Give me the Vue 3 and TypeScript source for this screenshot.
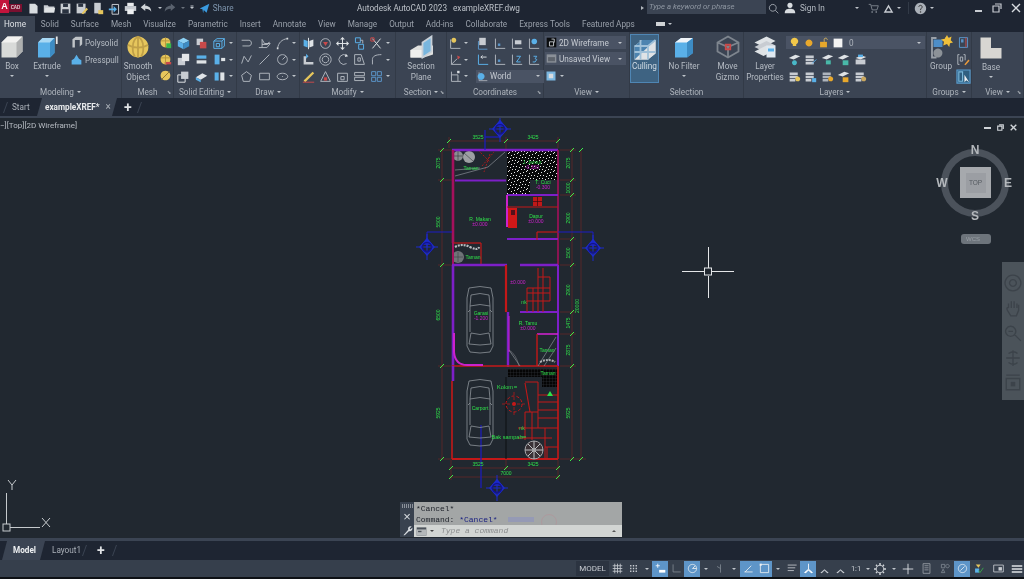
<script setup lang="ts">
import { h } from 'vue'
import type { FunctionalComponent } from 'vue'

type Shape = [string, string?, string?]
const cube = (t: string, l: string, r: string): Shape[] => [
  ['M8 1 15 4.5 8 8 1 4.5Z', t],
  ['M1 4.5 8 8V15L1 11.5Z', l],
  ['M15 4.5 8 8V15L15 11.5Z', r],
]
const L = '#aeb4bc'
const B = '#5ab0e8'
const W = '#dfe3e6'
const Y = '#e6c65c'
const ICONS: Record<string, Shape[]> = {
  page: [['M3 2H10L13 5V14H3Z', '#d8dce0']],
  folder: [['M1 4H6L7 5.5H14V13H1Z', '#c8ccd2'], ['M3 7H15L13.5 13H1.5Z', '#e0e3e6']],
  disk: [['M2 2H14V14H2Z', '#c8ccd2'], ['M5 2H11V6H5ZM4 9H12V14H4Z', '#2a3240']],
  saveas: [['M2 2H13V14H2Z', '#c8ccd2'], ['M4 2H10V6H4Z', '#2a3240'], ['M8 14 14 7 16 9 10 15Z', Y]],
  phone: [['M4 1H12V14H4Z', '#c8ccd2'], ['M9 10H15V15H9Z', Y]],
  up: [['M5 3H13V15H5Z', 'none', '#c8ccd2'], ['M1 8H7V5L11 9 7 13V10H1Z', B]],
  printer: [['M4 1H12V5H4Z', '#e8eaec'], ['M1 5H15V11H1Z', '#c8ccd2'], ['M4 9H12V15H4Z', '#eef0f2']],
  undo: [['M1 7 7 2V5C12 5 15 8 15 13 13 10 11 9 7 9V12Z', '#d0d4d8']],
  redo: [['M15 7 9 2V5C4 5 1 8 1 13 3 10 5 9 9 9V12Z', '#5a626e']],
  plane: [['M1 8 15 1 11 14 7 10 6 15 5 9Z', '#3a9be0']],
  search: [['M7 2A5 5 0 1 1 6.9 2ZM10.5 10.5 15 15', 'none', '#aeb4bc']],
  user: [['M8 1A3.5 3.5 0 1 1 7.9 1ZM1 15C1 10 4 9 8 9S15 10 15 15Z', '#d8dce0']],
  cart: [['M1 2H4L6 10H13L15 4H5', 'none', '#888f98'], ['M5 12H7V14H5ZM11 12H13V14H11Z', '#888f98']],
  aTri: [['M8 2 15 14H1ZM8 6 4.5 12H11.5Z', '#c8ccd2']],
  help: [['M8 1A7 7 0 1 1 7.9 1Z', '#aab0b8'], ['M6 6C6 3.5 10 3.5 10 6 10 8 8 7.5 8 10', 'none', '#333'], ['M7.3 11.5H8.8V13H7.3Z', '#333']],
  boxBig: [['M1 5 5 1H15V11L11 15H1Z', '#d8dad8'], ['M1 5 5 1H15L11 5Z', '#f2f2f0'], ['M11 5 15 1V11L11 15Z', '#aeb0b0']],
  extr: [['M2 5 5 2H13V12L10 15H2Z', B], ['M2 5 5 2H13L10 5Z', '#a8d8f4'], ['M10 5 13 2V12L10 15Z', '#3d8cc4'], ['M14.5 1V6', 'none', '#e8e8e8']],
  poly: [['M3 4 7 1H15V10L12 13V5H6V14H3Z', '#c0c4c8']],
  press: [['M5 7 8 2 11 7 14 9V14H2V9Z', B]],
  sphere: [['M8 1A7 7 0 1 1 7.9 1Z', Y], ['M1.2 6.5C5 9 11 9 14.8 6.5M8 1V15M8 1C5 3 4.5 6 4.6 7.8C4.2 10.5 5 13 6 14.5M8 1C11 3 11.5 6 11.4 7.8C11.8 10.5 11 13 10 14.5', 'none', '#c0a048']],
  sphG: [['M8 2A6 6 0 1 1 7.9 2Z', Y], ['M9 9H15V15H9Z', '#39b54a'], ['M2 6H14M8 2V14', 'none', '#b8963c']],
  sphR: [['M8 2A6 6 0 1 1 7.9 2Z', Y], ['M7 11H15V14H7Z', '#c94a4a'], ['M2 6H14M8 2V14', 'none', '#b8963c']],
  sphC: [['M8 2A6 6 0 1 1 7.9 2Z', Y], ['M3 13 13 3', 'none', '#8c7430']],
  se1: cube('#8cd0f4', B, '#3d8cc4'),
  se2: [['M2 2H10V10H2Z', '#c8ccd2'], ['M6 6H14V14H6Z', '#c94a4a']],
  se3: [['M1 5 5 2H14V11L11 14H1Z', 'none', B], ['M1 5H11V14M11 5 14 2', 'none', B], ['M4 8H8V12H4Z', 'none', B]],
  se4: [['M1 6H10V15H1Z', '#c8ccd2'], ['M6 1H15V10H6Z', '#e4e6e8']],
  se5: [['M2 3H14V7H2Z', B], ['M2 9H14V13H2Z', W]],
  se6: [['M2 2H8V14H2Z', B], ['M10 6H15V10H10Z', W]],
  se7: [['M1 6H10V15H1Z', 'none', W], ['M5 2H14V11H5Z', '#c8ccd2']],
  se8: [['M1 9 9 4 15 7 7 12Z', W], ['M1 9V12L7 15V12Z', B]],
  se9: [['M2 3H7V13H2Z', B], ['M9 3H14V13H9Z', W]],
  d1: [['M2 4H11C15 4 15 11 11 11H3', 'none', L]],
  d2: [['M1 13H11L15 8H8L5 3V13', 'none', L], ['M5 9 12 9 14 6', 'none', '#c8ccd2']],
  d3: [['M2 14C3 7 7 3 14 2', 'none', L], ['M1 13H3V15H1ZM13 1H15V3H13Z', '#d8dce0']],
  d4: [['M2 13 5 4 10 11 14 3', 'none', L]],
  d5: [['M2 14 14 2', 'none', L]],
  d6: [['M8 2A6 6 0 1 1 7.9 2ZM8 8 12 4', 'none', L]],
  d7: [['M8 2 14 6.5 12 14H4L2 6.5Z', 'none', L]],
  d8: [['M2 4H14V12H2Z', 'none', L]],
  d9: [['M8 4A6.5 4 0 1 1 7.9 4ZM8 7.5V8.5', 'none', L]],
  m1: [['M2 3 7 5V13L2 11Z', B], ['M9 5 14 3V11L9 13Z', W], ['M8 1V15', 'none', W]],
  m2: [['M8 2A6 6 0 1 1 7.9 2Z', 'none', L], ['M5 6H11L8 11Z', '#c94a4a']],
  m3: [['M8 1V15M1 8H15', 'none', W], ['M8 0 11 3H5ZM8 16 5 13H11ZM0 8 3 5V11ZM16 8 13 11V5Z', W]],
  m4: [['M3 1H9V7H3ZM7 9H13V15H7Z', 'none', B], ['M9 4H12V8', 'none', L]],
  m5: [['M3 2 13 14M13 2 3 14', 'none', W], ['M1 1H5V5H1Z', 'none', '#c94a4a']],
  m6: [['M2 14V4H5V11H14V14Z', '#c8ccd2'], ['M5 1 8 4 5 7Z', B]],
  m7: [['M8 1A7 7 0 1 1 7.9 1ZM8 4A4 4 0 1 1 7.9 4Z', 'none', L]],
  m8: [['M13 3A6 6 0 1 0 13 13', 'none', L], ['M12 1 15 4 11 5Z', W]],
  m9: [['M2 14V2H10L14 14Z', 'none', L], ['M6 6H9V10H6Z', 'none', L]],
  m10: [['M3 14V8C3 4 7 2 14 2', 'none', L]],
  m11: [['M2 13 13 2 15 4 4 15Z', Y], ['M1 15H15', 'none', '#c94a4a']],
  m12: [['M8 2 14 14H2Z', 'none', L], ['M6 9H10V13H6Z', '#c94a4a']],
  m13: [['M2 4H14V14H2Z', 'none', L], ['M6 8H10V12H6Z', 'none', L]],
  m14: [['M2 3H14V7H2ZM2 9H14V13H2Z', 'none', L]],
  m15: [['M2 2H7V7H2ZM9 2H14V7H9ZM2 9H7V14H2ZM9 9H14V14H9Z', 'none', '#5a94c8']],
  sec: [['M1 10 6 7 16 7V13L10 15H1Z', '#dfe0de'], ['M1 10H10V15H1Z', '#f0f0ee'], ['M9 5 15 1V11L9 15Z', '#79b6de', '#c8d0d8']],
  c1: [['M2 3V14H14', 'none', L], ['M6 1A3 3 0 1 1 5.9 1Z', Y]],
  c2: [['M4 1H12V10H4Z', '#c8ccd2'], ['M3 5V15H14', 'none', '#5a94c8']],
  c3: [['M3 2V14H15', 'none', L], ['M6 8H9V11H6Z', '#5a94c8']],
  c4: [['M3 2V14H15', 'none', L], ['M6 4H14V9H6Z', '#c8ccd2']],
  c5: [['M3 2V14H15', 'none', L], ['M9 2A3.5 3.5 0 1 1 8.9 2Z', B]],
  c6: [['M3 2V14H15M3 14 10 7', 'none', L], ['M10 3 14 5 11 8Z', '#c94a4a']],
  c7: [['M3 2V14H15', 'none', B], ['M6 5H13M6 5 8 3M6 5 8 7', 'none', '#d8dce0']],
  c8: [['M3 2V14H15', 'none', L], ['M8 4H13L8 11H13', 'none', B]],
  c9: [['M3 2V14H15', 'none', L], ['M8 4H12L10 7 12 8 10 11H7', 'none', B]],
  c10: [['M3 2V14H15M3 6H11V14', 'none', L], ['M10 1H13V4H10Z', '#d8dce0']],
  vw: [['M2 2H14V14H2Z', '#7ab6e0'], ['M5 5H11V11H5Z', '#d8dce0']],
  wire: [['M1 1H15V15H1Z', '#0a0c0e'], ['M5 7H11V13H5ZM8 3 12 3 12 8', 'none', '#d8dce0']],
  unsaved: [['M1 2H15V14H1Z', '#8a9098'], ['M3 6H13V12H3Z', '#5e646c']],
  world: [['M3 2V14H15', 'none', L], ['M6 3A5 5 0 1 1 5.9 3Z', B]],
  cull: [['M1 6 6 2H15V11L10 15H1Z', '#dfe3e6'], ['M1 15 15 2V11L10 15Z', '#dfe3e6'], ['M1 6 6 2H15L1 15Z', '#4d84b0'], ['M1 6H10V15M10 6 15 2M5 2V15M1 10H15', 'none', '#9fc0d8']],
  nofilt: [['M2 5 6 2H14V12L10 15H2Z', B], ['M2 5 6 2H14L10 5Z', '#f0f4f8'], ['M10 5 14 2V12L10 15Z', '#3d8cc4']],
  gizmo: [['M8 1 15 5V11L8 15 1 11V5ZM1 5 8 8 15 5M8 8V15', 'none', '#7e858e'], ['M6.5 6.5H9.5V9.5H6.5Z', 'none', '#c94a4a']],
  lprop: [['M1 5 9 1 15 4 7 8Z', W], ['M1 8 9 4 15 7 7 11Z', '#c8ccd2'], ['M1 11 9 7 15 10 7 14Z', W], ['M9 7H15V15H9Z', '#dfe8f0'], ['M10 9H14V11H10Z', B]],
  bulb: [['M8 1A5 5 0 0 1 10.5 10.5V13H5.5V10.5A5 5 0 0 1 8 1Z', '#f2c84a']],
  sun: [['M8 2.5A5.5 5.5 0 1 1 7.9 2.5Z', '#e8a82c']],
  lock: [['M3 7H13V15H3Z', '#e8a82c'], ['M9 7V3.5C9 1 13.5 1 13.5 4', 'none', '#e8c05c']],
  white: [['M1 1H15V15H1Z', '#f4f4f4']],
  l1: [['M1 6 9 2 15 4 7 8Z', W], ['M8 9A3 3 0 1 1 7.9 9Z', '#49b8c8']],
  l2: [['M2 3H12V6H2ZM2 7H12V10H2ZM2 11H12V14H2Z', '#c8ccd2'], ['M10 13 15 8', 'none', B]],
  l3: [['M1 6 9 2 15 4 7 8Z', W], ['M6 9H12V14H6Z', '#49b8a8']],
  l4: [['M1 6 9 2 15 4 7 8Z', W], ['M7 9H14V15H7Z', '#49b8a8']],
  l5: [['M2 6 9 3 15 5 8 8Z', W], ['M5 2H11V5H5Z', B], ['M2 8H14V14H2Z', '#c8ccd2']],
  l6: [['M2 3H12V6H2ZM2 7H12V10H2ZM2 11H9V14H2Z', '#c8ccd2'], ['M12 8A3 3 0 1 1 11.9 8Z', Y]],
  l7: [['M2 3H12V6H2ZM2 7H12V10H2ZM2 11H9V14H2Z', '#c8ccd2'], ['M10 10H15V15H10Z', B]],
  l8: [['M2 3H12V6H2ZM2 7H12V10H2ZM2 11H9V14H2Z', '#aeb4bc'], ['M12 8A3 3 0 1 1 11.9 8Z', '#e8a82c']],
  l9: [['M1 6 9 2 15 4 7 8Z', W], ['M7 9H14V15H7Z', '#e8a82c']],
  l10: [['M2 3H12V6H2ZM2 7H12V10H2ZM2 11H9V14H2Z', '#c8ccd2'], ['M12 8A3 3 0 1 1 11.9 8Z', '#caa860']],
  group: [['M5 2H2V15H5M11 2H13', 'none', '#9aa0a8'], ['M3 3H9V8H3Z', '#4e8ec8'], ['M6 9A3 3 0 1 1 5.9 9Z', '#8c9298'], ['M12 0 13 2 15 1 14.5 3.5 16 5 14 5.5 13.5 8 12 6 9.5 7 10 4.5 8 3 10.5 2.5Z', '#f0c03a']],
  g1: [['M3 2H13V14H3Z', 'none', '#5a94c8'], ['M5 4H8V8H5Z', '#5a94c8'], ['M11 2V14', 'none', '#c94a4a']],
  g2: [['M3 2H1V14H3M8 2H10V9', 'none', L], ['M4 5H7V10H4Z', 'none', L], ['M9 14 14 8 15.5 9.5 10.5 15Z', '#e89a3c']],
  g3: [['M1 1H15V15H1Z', '#2f5f80', '#5a9ccc'], ['M3 3H7V13H3Z', 'none', '#7ab6d8'], ['M9 6V14L11 12 14 14Z', '#eef0f2']],
  base: [['M1 1H8V8H15V15H1Z', '#d8d6d2']],
  grid: [['M1 4H15M1 8H15M1 12H15M4 1V15M8 1V15M12 1V15', 'none', '#c8ccd2']],
  dots: [['M3 3H5V5H3ZM7 3H9V5H7ZM11 3H13V5H11ZM3 7H5V9H3ZM7 7H9V9H7ZM11 7H13V9H11ZM3 11H5V13H3ZM7 11H9V13H7ZM11 11H13V13H11Z', '#c8ccd2']],
  track: [['M4 1V7M1 4H7', 'none', '#fff'], ['M6 10H15V14H6Z', '#fff']],
  ortho: [['M3 2V13H14', 'none', '#808892']],
  polar: [['M8 2A6 6 0 1 1 7.9 2ZM8 8H14M8 8 12 4', 'none', '#eef0f2']],
  iso: [['M8 2V14M3 5 8 8', 'none', '#808892']],
  slope: [['M2 13H14M3 13 12 4', 'none', '#eef0f2']],
  snapbox: [['M2 2H14V14H2Z', 'none', '#eef0f2'], ['M1 1H4V4H1Z', '#eef0f2']],
  lw: [['M1 3H14M1 7H12M1 11H10', 'none', '#c8ccd2']],
  an1: [['M8 1V9L2 14M8 9 14 14', 'none', '#fff'], ['M8 1V9L2 14 4 15 8 11 12 15 14 14 8 9Z', '#fff']],
  an2: [['M8 2V9L2 14 4 15 8 11 12 15 14 14 8 9Z', '#c8ccd2']],
  gear: [['M8 3A5 5 0 1 1 7.9 3Z', 'none', '#d0d4d8'], ['M7 0H9V3H7ZM7 13H9V16H7ZM0 7H3V9H0ZM13 7H16V9H13ZM2 3 3.5 1.8 5 3.5 3.5 5ZM11 12.5 12.5 11 14 12.7 12.6 14ZM2 12.7 3.5 11 5 12.5 3.4 14ZM11 3.5 12.5 1.8 14 3 12.5 5Z', '#d0d4d8']],
  plus: [['M8 1V15M1 8H15', 'none', '#e0e3e6']],
  calc: [['M3 1H13V15H3Z', 'none', '#9aa0a8'], ['M5 4H11M5 7H11M5 10H11', 'none', '#9aa0a8']],
  shapes: [['M2 2H7V7H2ZM11 2A2.5 2.5 0 1 1 10.9 2ZM4.5 9 7 14H2Z', 'none', '#808892']],
  gauge: [['M8 2A6 6 0 1 1 7.9 2ZM5 11 11 5', 'none', '#e8eef4']],
  clean: [['M4 2 11 2 8 7Z', Y], ['M3 8H9V14H3Z', B], ['M8 11 10 14 15 7', 'none', '#39b54a']],
  mon: [['M1 3H15V13H1Z', 'none', '#c8ccd2'], ['M8 6H13V11H8Z', '#c8ccd2']],
  menu: [['M1 3H15V5H1ZM1 7H15V9H1ZM1 11H15V13H1Z', '#e0e3e6']],
  wrench: [['M2 15 9 7C8 3 11 1 14 2L11 5 12.5 6.5 15 3.5C16 7 13 9.5 10 9L4 15Z', '#d8dce0']],
  term: [['M1 2H15V14H1Z', '#4c525a'], ['M1 5H15V14H1Z', '#b4b8ba'], ['M3 7H8V9H3Z', '#4c525a']],
  nav1: [['M8 1A7 7 0 1 1 7.9 1ZM8 5A3 3 0 1 1 7.9 5Z', 'none', '#3c434a']],
  nav2: [['M4 8V4M6.5 8V2M9 8V2M11.5 8V4M4 8C3 7 2 8 3 10L6 15H11L13 10V5', 'none', '#3c434a']],
  nav3: [['M6 2A4.5 4.5 0 1 1 5.9 2ZM9 9 15 15M4 6.5H8', 'none', '#3c434a']],
  nav4: [['M8 1V15M2 8H14M4 4C7 2 10 2 12 4M4 12C7 14 10 14 12 12', 'none', '#3c434a']],
  nav5: [['M2 4H14V14H2ZM2 1H14', 'none', '#3c434a'], ['M6 7H10V11H6Z', '#3c434a']],
}

const Ico: FunctionalComponent<{ name: string; size?: number }> = (p) =>
  h('svg', { width: p.size ?? 13, height: p.size ?? 13, viewBox: '0 0 16 16', class: 'ico' },
    (ICONS[p.name] ?? []).map(([d, f, s]) => h('path', { d, fill: f || 'none', stroke: s || 'none', 'stroke-width': 1.2 })))
Ico.props = ['name', 'size']

const ribbonTabs = ['Home', 'Solid', 'Surface', 'Mesh', 'Visualize', 'Parametric', 'Insert', 'Annotate', 'View', 'Manage', 'Output', 'Add-ins', 'Collaborate', 'Express Tools', 'Featured Apps']
const qat = ['page', 'folder', 'disk', 'saveas', 'phone', 'up', 'printer']
const meshIcons = ['sphG', 'sphR', 'sphC']
const solidIcons = ['se1', 'se2', 'se3', 'caret', 'se4', 'se5', 'se6', 'caret', 'se7', 'se8', 'se9', 'caret']
const drawIcons = ['d1', 'd2', 'd3', 'caret', 'd4', 'd5', 'd6', 'caret', 'd7', 'd8', 'd9', 'caret']
const modifyIcons = ['m1', 'm2', 'm3', 'm4', 'm5', 'caret', 'm6', 'm7', 'm8', 'm9', 'm10', 'caret', 'm11', 'm12', 'm13', 'm14', 'm15', 'caret']
const coordIcons = ['c1', 'caret', 'c2', 'c3', 'c4', 'c5', 'c6', 'caret', 'c7', 'c3', 'c8', 'c9', 'c10', 'caret']
const layerIcons = ['l1', 'l2', 'l3', 'l4', 'l5', 'l6', 'l7', 'l8', 'l9', 'l10']
const statusItems = [
  ['grid', 'w16'], ['dots', 'w17'], ['caret', 'w10'], ['track', 'w16 on'], ['ortho', 'w16'], ['polar', 'w16 on'], ['caret', 'w12'],
  ['iso', 'w16'], ['caret', 'w12'], ['slope', 'w16 on'], ['snapbox', 'w16 on'], ['caret', 'w12'], ['lw', 'w16'], ['an1', 'w16 on'],
  ['an2', 'w16'], ['an2', 'w16'], ['ratio', 'w16'], ['caret', 'w8'], ['gear', 'w16'], ['caret', 'w12'], ['plus', 'w16'], ['calc', 'w20'],
  ['shapes', 'w18'], ['gauge', 'w16 on'], ['clean', 'w16'], ['mon', 'w24'], ['menu', 'w14'],
]
const navIcons = ['nav1', 'nav2', 'nav3', 'nav4', 'nav5']

const RED = '#c41818'
const PUR = '#7d1fc8'
const CRI = '#a5105c'
const MAG = '#cc22cc'
const EXT = '#7a2626'
const WHT = '#9aa0a6'
const BLU = '#1c1cc4'
type Seg = [number, number, number, number, string, number?]
const segs: Seg[] = [
  [449, 141, 558, 141, EXT], [449, 137, 449, 148, EXT], [506, 137, 506, 150, EXT], [558, 137, 558, 148, EXT],
  [442, 148, 442, 459, EXT], [438, 150, 452, 150, EXT], [438, 180, 452, 180, EXT], [438, 265, 452, 265, EXT], [438, 366, 452, 366, EXT], [438, 459, 452, 459, EXT],
  [572, 148, 572, 459, EXT], [560, 150, 576, 150, EXT], [560, 180, 576, 180, EXT], [560, 195, 576, 195, EXT], [560, 239, 576, 239, EXT],
  [560, 265, 576, 265, EXT], [560, 312, 576, 312, EXT], [560, 334, 576, 334, EXT], [560, 366, 576, 366, EXT], [560, 459, 586, 459, EXT], [581, 150, 581, 459, EXT],
  [449, 468, 560, 468, EXT], [449, 477, 560, 477, EXT], [451, 460, 451, 480, EXT], [506, 460, 506, 470, EXT], [558, 460, 558, 480, EXT],
  [452, 150, 558, 150, PUR, 2.4], [453, 150, 453, 243, CRI, 2.6], [558, 150, 558, 265, CRI, 1.6], [455, 180.5, 506, 180.5, PUR, 2],
  [507, 195, 558, 195, PUR, 2], [507, 195, 507, 227, MAG, 2], [507, 207, 558, 207, RED, 1], [507, 239, 558, 239, PUR, 1.8],
  [537, 232, 557, 232, RED, 1.2], [537, 232, 537, 240, RED, 1.2],
  [453, 243, 481, 243, RED, 1.2], [481, 243, 481, 265, RED, 1.2], [453, 243, 453, 265, CRI, 2],
  [452, 265, 507, 265, PUR, 2.4], [520, 265, 558, 265, PUR, 2.4], [453, 265, 453, 366, PUR, 2.6], [558, 265, 558, 366, PUR, 2],
  [506, 265, 506, 312, RED, 2.2], [508, 312, 508, 367, PUR, 2.4], [520, 312, 558, 312, PUR, 1.8],
  [537, 334, 558, 334, MAG, 1.6], [537, 334, 537, 366, RED, 1.4], [452, 366, 558, 366, RED, 1.4], [453, 366, 453, 381, PUR, 2.6],
  [452, 381, 452, 459, RED, 1.6], [558, 366, 558, 459, RED, 1.6], [452, 459, 558, 459, RED, 1.8], [506, 377, 506, 459, '#0c0e10', 1],
  [538, 268, 538, 312, RED, 1], [543, 268, 543, 312, RED, 1], [527, 288, 550, 288, RED, 1], [527, 293, 550, 293, RED, 1], [527, 301, 550, 301, RED, 1],
  [550, 277, 550, 301, RED, 1], [527, 288, 527, 312, RED, 1], [533, 288, 533, 312, RED, 1], [538, 277, 550, 277, RED, 1],
  [525, 383, 530, 412, RED, 1.1], [538, 382, 538, 428, RED, 1], [525, 382, 538, 382, RED, 1], [538, 395, 558, 395, RED, 1], [538, 402, 558, 402, RED, 1],
  [538, 410, 558, 410, RED, 1], [538, 418, 558, 418, RED, 1], [525, 412, 538, 412, RED, 1], [525, 412, 525, 440, RED, 1], [532, 412, 532, 440, RED, 1],
  [518, 428, 558, 428, RED, 1], [518, 438, 552, 438, RED, 1], [545, 447, 558, 447, RED, 1], [547, 447, 547, 458, RED, 1], [545, 428, 545, 458, RED, 1],
  [514, 387, 517, 387, '#2fe04a', 1], [522, 437, 526, 437, '#2fe04a', 1],
  [455, 176, 488, 167, WHT, 0.6], [488, 167, 505, 152, WHT, 0.6], [455, 170, 480, 168, WHT, 0.6], [538, 366, 556, 337, WHT, 0.6], [544, 366, 556, 348, WHT, 0.6],
  [509, 350, 520, 366, WHT, 0.6], [481, 425, 481, 488, BLU, 1.2], [485, 130, 485, 150, BLU, 1.2], [485, 137, 500, 137, BLU, 1.2],
  [427, 232, 452, 232, BLU, 1], [427, 232, 427, 247, BLU, 1], [558, 232, 593, 232, BLU, 1], [593, 232, 593, 247, BLU, 1],
]
const ticks: [number, number][] = [[449, 141], [506, 141], [558, 141], [442, 150], [442, 180], [442, 265], [442, 366], [442, 459], [572, 150], [572, 180], [572, 195], [572, 239], [572, 265], [572, 312], [572, 334], [572, 366], [572, 459], [581, 150], [581, 459], [451, 468], [506, 468], [558, 468], [451, 477], [558, 477]]
const tickSegs = ticks.map(([x, y]) => `M${x - 2} ${y + 2}L${x + 2} ${y - 2}`).join('')
const GRN = '#2fe04a'
type Lbl = [number, number, string, string, number?]
const labels: Lbl[] = [
  [478, 139, '3525', GRN], [533, 139, '3425', GRN], [478, 466, '3525', GRN], [533, 466, '3425', GRN], [506, 475, '7000', GRN],
  [471, 170, 'Taman', GRN], [543, 184, 'T. Cuci', GRN], [543, 189, '-0.300', MAG], [532, 164, 'J. Jemur', GRN], [532, 169, '-0.300', MAG],
  [480, 221, 'R. Makan', GRN], [480, 226, '±0.000', MAG], [536, 218, 'Dapur', GRN], [536, 223, '±0.000', MAG], [473, 259, 'Taman', GRN],
  [518, 284, '±0.000', MAG], [524, 304, 'nk', GRN], [481, 315, 'Garasi', GRN], [481, 320, '-1.200', MAG], [528, 325, 'R. Tamu', GRN], [528, 330, '±0.000', MAG],
  [547, 352, 'Taman', GRN], [548, 375, 'Taman', GRN], [480, 410, 'Carport', GRN], [522, 430, 'nk', GRN],
]
const big: Lbl[] = [[505, 389, 'Kolom', GRN], [507, 439, 'Bak sampah', GRN]]
const vert: [number, number, string][] = [
  [440, 163, '2075'], [440, 222, '5500'], [440, 315, '6500'], [440, 413, '5925'], [570, 163, '2075'], [570, 188, '1000'], [570, 218, '2900'],
  [570, 253, '1500'], [570, 290, '2900'], [570, 323, '1475'], [570, 350, '2875'], [570, 413, '5925'], [579, 306, '20000'],
]
const symbols: [number, number][] = [[500, 129], [427, 247], [593, 248], [497, 488]]
</script>

<template>
  <div class="app">
    <header class="title">
      <div class="logo-a">A</div>
      <div class="logo-cad">CAD</div>
      <div class="qat">
        <span v-for="n in qat" :key="n" class="qslot"><Ico :name="n" :size="13" /></span>
        <span class="qslot"><Ico name="undo" :size="12" /></span><i class="caret small" />
        <span class="qslot"><Ico name="redo" :size="12" /></span><i class="caret small dim" />
        <span class="qslot narrow"><i class="caret bar" /></span>
        <Ico name="plane" :size="11" />
        <span class="share">Share</span>
      </div>
      <div class="app-name">Autodesk AutoCAD 2023</div>
      <div class="doc-name">exampleXREF.dwg</div>
      <i class="caret right" />
      <div class="search">Type a keyword or phrase</div>
      <Ico class="mag" name="search" :size="11" />
      <Ico class="usr" name="user" :size="12" />
      <span class="sign">Sign In</span>
      <i class="caret small sign-caret" />
      <Ico class="crt" name="cart" :size="11" />
      <Ico class="tri" name="aTri" :size="11" />
      <i class="caret small" />
      <span class="vsep" />
      <Ico class="hlp" name="help" :size="13" />
      <i class="caret small" />
      <div class="win">
        <span class="win-min" />
        <svg width="10" height="10" viewBox="0 0 10 10" class="ico"><path d="M3 1H9V6M1 3H7V9H1Z" fill="none" stroke="#c8ccd2" stroke-width="1.2" /></svg>
        <svg width="10" height="10" viewBox="0 0 10 10" class="ico"><path d="M1 1 9 9M9 1 1 9" fill="none" stroke="#d8dce0" stroke-width="1.4" /></svg>
      </div>
    </header>

    <nav class="rtabs">
      <span v-for="(t, i) in ribbonTabs" :key="t" class="rtab" :class="{ active: i === 0 }">{{ t }}</span>
      <span class="tab-toggle" /><i class="caret small" />
    </nav>

    <section class="ribbon">
      <div class="panel p-model">
        <div class="pbody">
          <div class="bigbtn w-box"><Ico name="boxBig" :size="24" /><span>Box</span><i class="caret tiny" /></div>
          <div class="bigbtn w-ext"><Ico name="extr" :size="24" /><span>Extrude</span><i class="caret tiny" /></div>
          <div class="pair">
            <div class="pair-row"><Ico name="poly" :size="13" /><span>Polysolid</span></div>
            <div class="pair-row"><Ico name="press" :size="13" /><span>Presspull</span></div>
          </div>
        </div>
        <div class="pfoot">Modeling<i class="caret small" /></div>
      </div>
      <div class="panel p-mesh">
        <div class="pbody">
          <div class="bigbtn w-smooth"><Ico name="sphere" :size="24" /><span>Smooth</span><span>Object</span></div>
          <div class="col3"><Ico v-for="n in meshIcons" :key="n" :name="n" :size="13" /></div>
        </div>
        <div class="pfoot">Mesh<i class="corner">⬊</i></div>
      </div>
      <div class="panel p-solid">
        <div class="pbody"><div class="smalls s-solid"><template v-for="(n, i) in solidIcons" :key="i"><i v-if="n === 'caret'" class="caret small cell-caret" /><Ico v-else :name="n" /></template></div></div>
        <div class="pfoot">Solid Editing<i class="caret small" /></div>
      </div>
      <div class="panel p-draw">
        <div class="pbody"><div class="smalls s-solid"><template v-for="(n, i) in drawIcons" :key="i"><i v-if="n === 'caret'" class="caret small cell-caret" /><Ico v-else :name="n" /></template></div></div>
        <div class="pfoot">Draw<i class="caret small" /></div>
      </div>
      <div class="panel p-modify">
        <div class="pbody"><div class="smalls s-modify"><template v-for="(n, i) in modifyIcons" :key="i"><i v-if="n === 'caret'" class="caret small cell-caret" /><Ico v-else :name="n" /></template></div></div>
        <div class="pfoot">Modify<i class="caret small" /></div>
      </div>
      <div class="panel p-section">
        <div class="pbody"><div class="bigbtn w-sec"><Ico name="sec" :size="24" /><span>Section</span><span>Plane</span></div></div>
        <div class="pfoot">Section<i class="caret small" /><i class="corner">⬊</i></div>
      </div>
      <div class="panel p-coord">
        <div class="pbody">
          <div class="smalls s-coord">
            <template v-for="(n, i) in coordIcons" :key="i"><i v-if="n === 'caret'" class="caret small cell-caret" /><Ico v-else :name="n" /></template>
            <div class="combo world"><Ico name="world" :size="11" /><span>World</span><i class="caret small push" /></div>
          </div>
        </div>
        <div class="pfoot">Coordinates<i class="corner">⬊</i></div>
      </div>
      <div class="panel p-view">
        <div class="pbody view-col">
          <div class="combo wide"><Ico name="wire" :size="11" /><span>2D Wireframe</span><i class="caret small push" /></div>
          <div class="combo wide"><Ico name="unsaved" :size="11" /><span>Unsaved View</span><i class="caret small push" /></div>
          <div class="view-icon"><Ico name="vw" :size="12" /><i class="caret small" /></div>
        </div>
        <div class="pfoot">View<i class="caret small" /></div>
      </div>
      <div class="panel p-sel">
        <div class="pbody">
          <div class="culling"><Ico name="cull" :size="24" /><span>Culling</span></div>
          <div class="bigbtn w-filter"><Ico name="nofilt" :size="24" /><span>No Filter</span><i class="caret tiny" /></div>
          <div class="bigbtn w-gizmo"><Ico name="gizmo" :size="24" /><span>Move</span><span>Gizmo</span></div>
        </div>
        <div class="pfoot">Selection</div>
      </div>
      <div class="panel p-layers">
        <div class="pbody">
          <div class="bigbtn w-lprop"><Ico name="lprop" :size="24" /><span>Layer</span><span>Properties</span></div>
          <div class="layer-col">
            <div class="combo layer">
              <Ico name="bulb" :size="11" /><Ico name="sun" :size="10" /><Ico name="lock" :size="11" /><Ico name="white" :size="10" />
              <span class="zero">0</span><i class="caret small push" />
            </div>
            <div class="l-grid"><Ico v-for="n in layerIcons" :key="n" :name="n" :size="13" /></div>
          </div>
        </div>
        <div class="pfoot">Layers<i class="caret small" /></div>
      </div>
      <div class="panel p-groups">
        <div class="pbody">
          <div class="bigbtn w-group"><Ico name="group" :size="24" /><span>Group</span></div>
          <div class="col3"><Ico name="g1" :size="13" /><Ico name="g2" :size="13" /><Ico name="g3" :size="15" /></div>
        </div>
        <div class="pfoot">Groups<i class="caret small" /></div>
      </div>
      <div class="panel p-base">
        <div class="pbody"><div class="bigbtn w-base"><Ico name="base" :size="24" /><span>Base</span><i class="caret tiny" /></div></div>
        <div class="pfoot">View<i class="caret small" /><i class="corner">⬊</i></div>
      </div>
    </section>

    <nav class="ftabs">
      <span class="slash" />
      <span class="ftab">Start</span>
      <span class="ftab active">exampleXREF*<b class="close">×</b></span>
      <span class="fplus">+</span>
      <span class="slash" />
    </nav>
    <div class="rule" />

    <main class="canvas">
      <svg class="drawing" width="1024" height="420" viewBox="0 118 1024 420">
        <defs>
          <pattern id="hatch" width="9" height="9" patternUnits="userSpaceOnUse">
            <rect width="9" height="9" fill="#08090a" />
            <path d="M1 1h1v1H1zM4 0h1v1H4zM7 2h1v1H7zM0 4h1v1H0zM3 4h1v1H3zM6 5h1v1H6zM2 7h1v1H2zM5 8h1v1H5zM8 7h1v1H8z" fill="#e8e8e8" />
          </pattern>
          <pattern id="tiles" width="3" height="3" patternUnits="userSpaceOnUse">
            <rect width="3" height="3" fill="#050505" />
            <path d="M0 0H3M0 0V3" stroke="#3c4048" stroke-width="0.5" />
          </pattern>
          <g id="car" fill="none" stroke="#8d9399" stroke-width="0.8">
            <path d="M2 2Q13 -1 24 2L26 12V60L23 66Q13 68 3 66L0 60V12Z" />
            <path d="M4 9Q13 6 22 9L23 20Q13 17 3 20ZM3 20V46M23 20V46M4 47Q13 50 22 47L24 58Q13 60 2 58Z" />
            <path d="M1 26 3 24M25 26 23 24" />
          </g>
          <g id="sym" fill="none" stroke="#1c2acc" stroke-width="1.4">
            <path d="M0 -8 7 0 0 8 -7 0Z" />
            <path d="M0 -13V13M-11 0H11" stroke-width="1" />
            <path d="M-4 -3 0 -8 4 -3Z" fill="#1c2acc" />
            <circle r="4.5" stroke="#14148c" />
          </g>
        </defs>

        <rect x="507" y="151" width="50" height="29" fill="url(#hatch)" />
        <rect x="507" y="180" width="23" height="14" fill="url(#hatch)" />
        <rect x="508" y="208" width="9" height="20" fill="#d01818" />
        <rect x="511" y="210" width="4" height="5" fill="#55101a" />
        <rect x="533" y="197" width="9" height="9" fill="#c01818" />
        <path d="M533 201.5H542M537.5 197V206" stroke="#3a0c10" stroke-width="0.7" />
        <circle cx="458" cy="156" r="5" fill="#8a8e92" /><circle cx="469" cy="157" r="6" fill="#9da0a3" />
        <path d="M458 151V161M453 156H463M464 153 473 161" stroke="#33373c" stroke-width="0.6" />
        <path d="M478 150 490 162M482 166 494 152M490 154 484 172" stroke="#c41818" stroke-width="0.8" stroke-dasharray="2 1.5" fill="none" />
        <path d="M455 247Q462 243 470 247T479 247" fill="none" stroke="#b9bcbf" stroke-width="2.2" stroke-dasharray="2 1" />
        <circle cx="458" cy="257" r="6" fill="#6f7478" /><path d="M453 257H463M458 252V262" stroke="#3a3f44" stroke-width="0.6" />

        <line v-for="(s, i) in segs" :key="i" :x1="s[0]" :y1="s[1]" :x2="s[2]" :y2="s[3]" :stroke="s[4]" :stroke-width="s[5] ?? 0.6" />
        <path :d="tickSegs" stroke="#3cf04a" stroke-width="1" fill="none" />

        <path d="M454 333V352Q455 365 467 365H483" fill="none" stroke="#cc22cc" stroke-width="2" />
        <path d="M509 316V352" stroke="#cc22cc" stroke-width="1" />
        <path d="M519 366Q516 354 509 350" stroke="#7e8288" stroke-width="0.6" fill="none" />
        <rect x="508" y="369" width="34" height="8" fill="url(#tiles)" />
        <rect x="542" y="369" width="15" height="18" fill="url(#tiles)" />
        <path d="M540 362Q548 358 555 362" stroke="#aeb1b4" stroke-width="2" fill="none" stroke-dasharray="2 1" />

        <use href="#car" x="467" y="286" />
        <use href="#car" x="467" y="379" />

        <circle cx="514" cy="404" r="8" fill="none" stroke="#c41818" stroke-dasharray="3 2" />
        <path d="M514 392V416M502 404H526" stroke="#c41818" stroke-width="0.7" stroke-dasharray="3 2" />
        <circle cx="514" cy="404" r="2" fill="#c41818" />
        <path d="M550 391 553 396H547Z" fill="#2fe04a" />

        <circle cx="534" cy="450" r="9" fill="#3a3236" stroke="#a5a5a8" />
        <path d="M534 441V459M525 450H543M528 444 540 456M540 444 528 456" stroke="#c0c2c4" stroke-width="1" />
        <circle cx="534" cy="450" r="2" fill="#a5a5a8" />

        <use v-for="(p, i) in symbols" :key="i" href="#sym" :x="p[0]" :y="p[1]" />

        <text v-for="(t, i) in labels" :key="i" class="cad" :x="t[0]" :y="t[1]" :fill="t[3]">{{ t[2] }}</text>
        <text v-for="(t, i) in big" :key="'b' + i" class="cad lg" :x="t[0]" :y="t[1]" :fill="t[3]">{{ t[2] }}</text>
        <text v-for="(t, i) in vert" :key="'v' + i" class="cad" :x="t[0]" :y="t[1]" fill="#2fe04a" :transform="`rotate(-90 ${t[0]} ${t[1]})`">{{ t[2] }}</text>

        <g stroke="#e4e6e8" stroke-width="1" fill="none">
          <path d="M682 271.5H704M712 271.5H734M708.5 247V268M708.5 276V298" />
          <rect x="704.5" y="268" width="7" height="7" />
        </g>

        <g stroke="#c6cacd" stroke-width="1" fill="none">
          <path d="M6.5 493V524M10 527.5H40" />
          <rect x="3" y="524" width="7" height="7" />
          <path d="M8 480 12 485 16 480M12 485V490M42 518 50 527M50 518 42 527" />
        </g>
      </svg>

      <div class="vp-label">−][Top][2D Wireframe]</div>
      <div class="vp-win">
        <span class="vp-min" />
        <svg width="7" height="7" viewBox="0 0 10 10" class="ico"><path d="M3 1H9V7M1 3H7V9H1Z" fill="none" stroke="#d0d4d8" stroke-width="1.6" /></svg>
        <svg width="7" height="7" viewBox="0 0 10 10" class="ico"><path d="M1 1 9 9M9 1 1 9" fill="none" stroke="#d0d4d8" stroke-width="2" /></svg>
      </div>

      <div class="cube">
        <div class="ring" />
        <b class="dir n">N</b><b class="dir s">S</b><b class="dir w">W</b><b class="dir e">E</b>
        <div class="face"><span>TOP</span></div>
        <div class="wcs">WCS</div>
      </div>

      <aside class="navbar">
        <Ico v-for="n in navIcons" :key="n" :name="n" :size="18" />
      </aside>

      <div class="cmd">
        <div class="cmd-side">
          <span class="grip" />
          <span class="cmd-x">×</span>
          <Ico name="wrench" :size="11" />
        </div>
        <div class="cmd-main">
          <div class="cmd-hist">
            <div>*Cancel*</div>
            <div>Command: <span class="blue">*Cancel*</span></div>
            <span class="ghost-bar" />
            <span class="ghost-ring" />
          </div>
          <div class="cmd-input">
            <Ico name="term" :size="11" /><i class="caret small dark" />
            <span class="ph">Type a command</span>
            <i class="caret small up" />
          </div>
        </div>
      </div>
    </main>

    <div class="rule thick" />
    <nav class="ltabs">
      <span class="ltab active">Model</span>
      <span class="ltab">Layout1</span>
      <span class="slash" />
      <span class="lplus">+</span>
      <span class="slash" />
    </nav>
    <footer class="status">
      <span class="model">MODEL</span>
      <span v-for="(s, i) in statusItems" :key="i" class="st" :class="s[1]">
        <i v-if="s[0] === 'caret'" class="caret small" />
        <span v-else-if="s[0] === 'ratio'" class="ratio">1:1</span>
        <Ico v-else :name="s[0]" :size="s[0] === 'plus' || s[0] === 'menu' || s[0] === 'gear' ? 12 : 11" />
      </span>
    </footer>
    <div class="bottom" />
  </div>
</template>

<style>
html, body { margin: 0; background: #212830; }
</style>

<style scoped>
.app {
  width: 1024px; height: 579px; overflow: hidden; display: flex; flex-direction: column;
  font-family: Roboto, "Open Sans", sans-serif; font-size: 8.2px; color: #b6bcc4; background: #212830;
  filter: blur(0.35px);
}
.ico { display: block; flex: none; }
i { font-style: normal; }
.caret { display: inline-block; width: 0; height: 0; border-left: 2px solid transparent; border-right: 2px solid transparent; border-top: 2px solid #c0c5cb; flex: none; }
.caret.small { margin-left: 3px; }
.caret.dim { border-top-color: #6a727c; }
.caret.tiny { margin-top: 3px; }
.caret.bar { margin: 0; box-shadow: 0 -2px 0 -0.5px #c0c5cb; }
.caret.right { border: 2px solid transparent; border-left: 3px solid #b0b5bb; border-right: 0; margin: 0 3px 0 0; }
.caret.dark { border-top-color: #444; }
.caret.up { border-top: 0; border-bottom: 2px solid #555; margin-left: auto; margin-right: 6px; }
.push { margin-left: auto !important; }

.title { height: 16px; flex: none; display: flex; align-items: center; background: #1e2532; position: relative; }
.logo-a { width: 9px; height: 13px; background: #c3143c; color: #fff; font: bold 9px/13px "Liberation Sans", sans-serif; text-align: center; margin-top: -3px; }
.logo-cad { width: 13px; height: 8px; background: #7a1030; color: #e0d0d4; font: bold 4.5px/8px "Liberation Sans", sans-serif; text-align: center; margin-top: -1px; margin-right: 3px; }
.qat { display: flex; align-items: center; width: 212px; margin-right: 120px; }
.qslot { width: 16.2px; display: flex; justify-content: center; flex: none; }
.qslot.narrow { width: 14px; }
.share { margin-left: 3px; color: #7e95ad; }
.app-name { width: 96px; color: #bcc1c8; white-space: nowrap; }
.doc-name { width: 188px; color: #bcc1c8; }
.search { width: 119px; height: 14px; margin-top: -2px; background: #3b4453; color: #8f97a2; font-style: italic; line-height: 14px; padding-left: 2px; box-sizing: border-box; white-space: nowrap; font-size: 7.8px; }
.mag { margin-left: 2px; }
.usr { margin-left: 5px; }
.sign { margin-left: 4px; width: 52px; }
.sign-caret { margin-left: 0; }
.crt { margin-left: 9px; }
.tri { margin-left: 4px; }
.vsep { width: 1px; height: 12px; background: #323a47; margin: 0 5px 0 7px; }
.hlp { margin-left: 0; }
.win { margin-left: auto; display: flex; align-items: center; gap: 9px; padding-right: 3px; }
.win-min { width: 7px; height: 2px; background: #c8ccd2; margin-top: 6px; margin-right: 1px; }

.rtabs { height: 16px; flex: none; display: flex; align-items: center; background: #1e2532; }
.rtab { height: 16px; line-height: 16px; padding: 0 6px; color: #99a0aa; white-space: nowrap; }
.rtab.active { background: #3b4453; color: #dfe2e6; padding: 0 8.6px 0 4px; }
.tab-toggle { width: 9px; height: 4px; background: #d0d3d6; margin-left: 15px; }

.ribbon { height: 66px; flex: none; display: flex; background: #3b4453; }
.panel { flex: none; display: flex; flex-direction: column; border-right: 1px solid #323a47; box-sizing: border-box; }
.pbody { flex: 1; display: flex; padding-top: 3px; min-height: 0; }
.pfoot { height: 13px; padding-top: 1px; box-sizing: border-box; display: flex; align-items: center; justify-content: center; position: relative; color: #aeb4bc; line-height: 12px; white-space: nowrap; }
.corner { font-size: 5px; position: absolute; right: 2px; color: #9aa0a8; }
.p-model { width: 122px; } .p-mesh { width: 52px; } .p-solid { width: 63px; } .p-draw { width: 63px; }
.p-modify { width: 96px; } .p-section { width: 51px; } .p-coord { width: 97px; } .p-view { width: 86px; }
.p-sel { width: 114px; } .p-layers { width: 183px; } .p-groups { width: 45px; } .p-base { width: 52px; }
.bigbtn { display: flex; flex-direction: column; align-items: center; line-height: 11px; color: #b6bcc4; flex: none; }
.bigbtn .ico { margin-bottom: 1.5px; }
.w-box { width: 24px; } .w-ext { width: 44px; margin-left: 1px; }
.w-smooth { width: 34px; margin-left: -1px; margin-right: 2px; padding-left: 0; }
.w-sec { width: 50px; } .w-filter { width: 44px; margin-left: 3px; } .w-gizmo { width: 37px; margin-left: 3px; }
.w-lprop { width: 42px; } .w-group { width: 28px; } .w-base { width: 38px; }
.w-base .ico { margin-top: 1px; }
.pair { display: flex; flex-direction: column; gap: 4px; padding-top: 1px; margin-left: 1px; }
.pair-row { display: flex; align-items: center; gap: 2px; height: 13px; white-space: nowrap; }
.col3 { display: flex; flex-direction: column; align-items: center; justify-content: flex-start; gap: 3.5px; width: 16px; padding-top: 1px; }
.smalls { display: grid; grid-template-rows: repeat(3, 16.5px); align-items: center; justify-items: center; height: 50px; }
.s-solid { grid-template-columns: 18px 18px 18px 9px; }
.s-modify { grid-template-columns: repeat(5, 17px) 9px; }
.s-coord { grid-template-columns: 16px 10px 18px 17px 17px 17px; }
.cell-caret { justify-self: start; margin-left: 1px !important; }
.combo { display: flex; align-items: center; background: #4a5364; color: #c6cbd2; height: 13px; gap: 2px; padding: 0 4px 0 1px; box-sizing: border-box; white-space: nowrap; }
.world { grid-column: 3 / 7; width: 68px; justify-self: start; margin-left: 3px; }
.view-col { flex-direction: column; gap: 3px; padding-left: 1px; padding-top: 4px; }
.wide { width: 81px; }
.view-icon { display: flex; align-items: center; padding-left: 0; margin-top: 2px; }
.culling { width: 29px; height: 49px; margin: -1px 0 0 0; box-sizing: border-box; background: #3e6382; border: 1px solid #4f86b4; display: flex; flex-direction: column; align-items: center; line-height: 11px; color: #d0dbe4; padding-top: 2px; flex: none; }
.layer-col { width: 139px; display: flex; flex-direction: column; padding-top: 1px; }
.layer { gap: 4px; padding-left: 3px; }
.zero { color: #aeb4bc; margin-left: 2px; }
.l-grid { display: grid; grid-template-columns: repeat(5, 16.5px); grid-auto-rows: 17px; align-items: center; justify-items: center; margin-top: 2px; }

.ftabs { height: 18px; flex: none; display: flex; align-items: center; background: #1e2532; }
.slash { width: 1px; height: 11px; background: #3b4453; transform: skewX(-20deg); margin-left: 5px; flex: none; }
.ftab { color: #aab0b8; padding: 0 6px; line-height: 18px; white-space: nowrap; }
.ftabs .ftab:nth-child(2) { padding-left: 6px; width: 17px; }
.ftab.active { margin-left: 2px; width: 80px; box-sizing: border-box; padding: 0 0 0 8px; background: #3b4453; color: #e8eaec; font-weight: 700; clip-path: polygon(5px 0, 100% 0, calc(100% - 5px) 100%, 0 100%); display: flex; align-items: center; }
.close { font-weight: 400; font-size: 10px; color: #aab0b8; margin-left: 6px; }
.fplus { font-size: 14px; color: #e0e3e6; margin-left: 7px; line-height: 18px; width: 10px; font-weight: 600; }
.rule { height: 2px; flex: none; background: #3b4453; }
.rule.thick { height: 3px; background: #3b4453; }

.canvas { flex: none; height: 420px; position: relative; background: #212830; overflow: hidden; }
.drawing { position: absolute; inset: 0; display: block; }
.cad { font: 5px "Liberation Sans", sans-serif; text-anchor: middle; }
.cad.lg { font-size: 5.6px; }
.vp-label { position: absolute; left: 0; top: 3px; color: #b8bdc4; font-size: 8px; white-space: nowrap; }
.vp-win { position: absolute; left: 984px; top: 6px; display: flex; align-items: center; gap: 6px; }
.vp-min { width: 7px; height: 2px; background: #d0d4d8; }
.cube { position: absolute; left: 935px; top: 25px; width: 80px; height: 105px; }
.ring { position: absolute; left: 6px; top: 6px; width: 68px; height: 68px; box-sizing: border-box; border-radius: 50%; border: 7px solid #4b525b; }
.dir { position: absolute; font: bold 12px/14px "Liberation Sans", sans-serif; color: #b4b8bc; width: 14px; text-align: center; }
.dir.n { left: 33px; top: 0; } .dir.s { left: 33px; top: 66px; } .dir.w { left: 0; top: 33px; } .dir.e { left: 66px; top: 33px; }
.face { position: absolute; left: 25px; top: 24px; width: 31px; height: 31px; background: #a6a9ad; display: flex; align-items: center; justify-content: center; }
.face span { width: 20px; height: 20px; background: #9b9ea3; color: #555a60; font: 6.5px/20px "Liberation Sans", sans-serif; text-align: center; }
.wcs { position: absolute; left: 26px; top: 91px; width: 30px; height: 10px; border-radius: 3px; background: #6d747b; color: #9aa0a6; font: 6px/10px "Liberation Sans", sans-serif; text-align: center; padding-right: 6px; box-sizing: border-box; }
.navbar { position: absolute; left: 1002px; top: 144px; width: 22px; height: 138px; box-sizing: border-box; background: #4b535a; display: flex; flex-direction: column; align-items: center; justify-content: space-around; padding: 8px 0 4px; }

.cmd { position: absolute; left: 400px; top: 384px; width: 222px; height: 35px; display: flex; }
.cmd-side { width: 14px; background: #39424f; display: flex; flex-direction: column; align-items: center; justify-content: space-between; padding: 2px 0 1px; box-sizing: border-box; }
.grip { width: 11px; height: 4px; background: repeating-linear-gradient(90deg, #8b919a 0 1px, transparent 1px 2px); }
.cmd-x { color: #d8dce0; font: 13px/9px "Liberation Sans", sans-serif; }
.cmd-main { flex: 1; display: flex; flex-direction: column; position: relative; }
.cmd-hist { height: 23px; background: #a3a6a6; color: #1c2028; font: 8px/11px "Liberation Mono", monospace; padding: 1px 0 0 2px; box-sizing: border-box; position: relative; overflow: hidden; }
.blue { color: #1a2080; }
.ghost-bar { position: absolute; left: 94px; top: 15px; width: 26px; height: 5px; background: #8e96bc; opacity: 0.7; }
.ghost-ring { position: absolute; left: 127px; top: 12px; width: 16px; height: 16px; box-sizing: border-box; border-radius: 50%; border: 1px solid #ad9a9e; }
.cmd-input { height: 12px; background: #d2d5d3; display: flex; align-items: center; padding-left: 2px; font: italic 8px/12px "Liberation Mono", monospace; color: #8b8d8e; }
.ph { margin-left: 7px; }

.ltabs { height: 19px; flex: none; display: flex; align-items: center; background: #1e2532; padding-left: 2px; }
.ltab { line-height: 19px; color: #aab0b8; white-space: nowrap; }
.ltab.active { width: 43px; box-sizing: border-box; padding-left: 11px; background: #3b4453; color: #eef0f2; font-weight: 700; clip-path: polygon(5px 0, 100% 0, calc(100% - 5px) 100%, 0 100%); }
.ltab:nth-child(2) { margin-left: 7px; width: 27px; }
.lplus { font-size: 14px; line-height: 19px; color: #e0e3e6; margin-left: 12px; width: 12px; font-weight: 600; }

.status { height: 17px; flex: none; display: flex; align-items: center; background: #363f4c; padding-left: 576px; box-sizing: border-box; }
.model { width: 33px; height: 15px; background: #2c3441; color: #c8ccd2; line-height: 15px; text-align: center; font-size: 8px; flex: none; }
.st { height: 16px; display: flex; align-items: center; justify-content: center; flex: none; box-sizing: border-box; }
.st.on { background: #5e95c8; }
.st .caret { margin-left: 0; }
.w8 { width: 8px; } .w10 { width: 10px; } .w12 { width: 12px; } .w14 { width: 14px; } .w16 { width: 16px; } .w17 { width: 17px; } .w18 { width: 18px; } .w20 { width: 20px; } .w24 { width: 24px; }
.ratio { font-size: 7.5px; color: #c8ccd2; }
.bottom { height: 2px; flex: none; background: #0d1014; }
</style>
